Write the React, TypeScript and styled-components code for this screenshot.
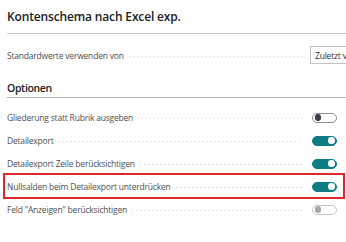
import React from "react";
import styled, { createGlobalStyle } from "styled-components";

const Global = createGlobalStyle`
  html, body { margin: 0; padding: 0; background: #ffffff; overflow: hidden; }
  body { font-family: "Segoe UI", "Open Sans", "Noto Sans", sans-serif; }
`;

const Page = styled.div`
  width: 346px;
  height: 242px;
  padding-left: 7px;
  box-sizing: border-box;
  overflow: hidden;
`;

const Header = styled.div`
  height: 33px;
  display: flex;
  align-items: center;
  border-bottom: 1px solid #c4c4c4;
`;

const Title = styled.h1`
  margin: 0;
  font-size: 12px;
  font-weight: 600;
  letter-spacing: -0.15px;
  color: #212121;
  white-space: nowrap;
`;

const SectionHead = styled.div`
  margin-top: 14px;
  height: 19px;
  display: flex;
  align-items: center;
  border-bottom: 1px solid #b4b4b8;
`;

const SectionTitle = styled.h2`
  margin: 0;
  font-size: 10.5px;
  font-weight: 600;
  letter-spacing: -0.35px;
  color: #212121;
`;

const List = styled.div`
  padding-top: 8px;
  display: flex;
  flex-direction: column;
`;

const Row = styled.div<{ $tall?: boolean; $highlight?: boolean; $top?: number }>`
  position: relative;
  display: flex;
  align-items: center;
  height: ${(p) => (p.$tall ? 18 : 23)}px;
  margin-top: ${(p) => p.$top ?? 0}px;
  &::after {
    content: "";
    display: ${(p) => (p.$highlight ? "block" : "none")};
    position: absolute;
    top: -2px;
    bottom: -1px;
    left: -4px;
    right: 1px;
    border: 2px solid #e3262c;
    pointer-events: none;
  }
`;

const Label = styled.span`
  font-size: 8.5px;
  letter-spacing: -0.2px;
  color: #505050;
  white-space: nowrap;
`;

const Leader = styled.span<{ $gap: number }>`
  flex: 1;
  height: 1px;
  margin: 2px ${(p) => p.$gap}px 0 5px;
  background-image: linear-gradient(to right, #d4d4d4 1px, transparent 1px);
  background-size: 4px 1px;
  background-repeat: repeat-x;
`;

const Control = styled.div<{ $w: number }>`
  width: ${(p) => p.$w}px;
  flex-shrink: 0;
  display: flex;
  align-items: center;
`;

const Input = styled.div`
  box-sizing: border-box;
  width: 120px;
  height: 18px;
  flex-shrink: 0;
  border: 1px solid #c2c2c2;
  padding-left: 4px;
  display: flex;
  align-items: center;
  font-size: 8.5px;
  letter-spacing: -0.2px;
  color: #303030;
  white-space: nowrap;
`;

type ToggleState = "on" | "off" | "disabled";

const Track = styled.div<{ $state: ToggleState }>`
  box-sizing: border-box;
  width: 25px;
  height: 10px;
  border-radius: 5px;
  display: flex;
  align-items: center;
  padding: 0 1.5px;
  justify-content: ${(p) => (p.$state === "on" ? "flex-end" : "flex-start")};
  background: ${(p) => (p.$state === "on" ? "#0e7c83" : "#ffffff")};
  border: 1px solid
    ${(p) => (p.$state === "on" ? "#0e7c83" : p.$state === "off" ? "#8c8c94" : "#c6c6ca")};
`;

const Thumb = styled.span<{ $state: ToggleState }>`
  width: 6.5px;
  height: 6.5px;
  border-radius: 50%;
  background: ${(p) =>
    p.$state === "on" ? "#ffffff" : p.$state === "off" ? "#3c3c4c" : "#a4a4ac"};
`;

const Toggle = ({ state }: { state: ToggleState }) => (
  <Track $state={state}>
    <Thumb $state={state} />
  </Track>
);

const options: { label: string; state: ToggleState; highlight?: boolean }[] = [
  { label: "Gliederung statt Rubrik ausgeben", state: "off" },
  { label: "Detailexport", state: "on" },
  { label: "Detailexport Zeile berücksichtigen", state: "on" },
  { label: "Nullsalden beim Detailexport unterdrücken", state: "on", highlight: true },
  { label: "Feld \"Anzeigen\" berücksichtigen", state: "disabled" },
];

export default function App() {
  return (
    <>
      <Global />
      <Page>
        <Header>
          <Title>Kontenschema nach Excel exp.</Title>
        </Header>
        <Row $tall $top={12}>
          <Label>Standardwerte verwenden von</Label>
          <Leader $gap={7} />
          <Control $w={36}>
            <Input>Zuletzt verwendet</Input>
          </Control>
        </Row>
        <SectionHead>
          <SectionTitle>Optionen</SectionTitle>
        </SectionHead>
        <List>
          {options.map((o) => (
            <Row key={o.label} $highlight={o.highlight}>
              <Label>{o.label}</Label>
              <Leader $gap={9} />
              <Control $w={34}>
                <Toggle state={o.state} />
              </Control>
            </Row>
          ))}
        </List>
      </Page>
    </>
  );
}
